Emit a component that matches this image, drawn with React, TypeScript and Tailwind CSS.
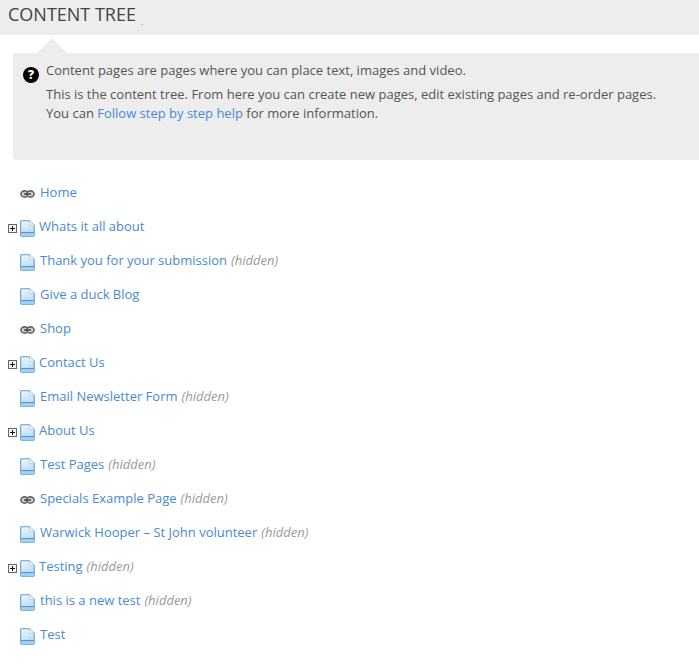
const items: { label: string; icon: "page" | "link"; plus?: boolean; hidden?: boolean }[] = [
  { label: "Home", icon: "link" },
  { label: "Whats it all about", icon: "page", plus: true },
  { label: "Thank you for your submission", icon: "page", hidden: true },
  { label: "Give a duck Blog", icon: "page" },
  { label: "Shop", icon: "link" },
  { label: "Contact Us", icon: "page", plus: true },
  { label: "Email Newsletter Form", icon: "page", hidden: true },
  { label: "About Us", icon: "page", plus: true },
  { label: "Test Pages", icon: "page", hidden: true },
  { label: "Specials Example Page", icon: "link", hidden: true },
  { label: "Warwick Hooper – St John volunteer", icon: "page", hidden: true },
  { label: "Testing", icon: "page", plus: true, hidden: true },
  { label: "this is a new test", icon: "page", hidden: true },
  { label: "Test", icon: "page" },
];

function PageIcon() {
  return (
    <svg width="15" height="17" viewBox="0 0 15 17" className="mt-[3px] shrink-0">
      <defs>
        <linearGradient id="pg" x1="0" y1="0" x2="0.3" y2="1">
          <stop offset="0" stopColor="#f3f8fd" />
          <stop offset="1" stopColor="#b9d8f2" />
        </linearGradient>
      </defs>
      <path d="M0.7 1.7 a1 1 0 0 1 1-1 H9.5 L14.2 5.2 V15.2 a1 1 0 0 1-1 1 H1.7 a1 1 0 0 1-1-1 Z" fill="url(#pg)" stroke="#5a9fd8" strokeWidth="1.1" />
      <path d="M9.5 0.7 V5.2 H14.2 Z" fill="#fafdff" stroke="#a9cdeb" strokeWidth="0.8" />
      <rect x="1.2" y="12" width="12.5" height="1.4" fill="#4f97d6" />
      <rect x="1.2" y="13.4" width="12.5" height="2.3" fill="#a6d0f0" />
    </svg>
  );
}

function LinkIcon() {
  return (
    <svg width="15" height="18" viewBox="0 0 15 18" className="shrink-0">
      <ellipse cx="4.6" cy="10" rx="3.7" ry="3.1" fill="#ccc" stroke="#666" strokeWidth="1.6" />
      <ellipse cx="10.4" cy="10" rx="3.7" ry="3.1" fill="#ccc" stroke="#666" strokeWidth="1.6" />
      <path d="M4 10 H11" stroke="#333" strokeWidth="1.3" />
    </svg>
  );
}

function Plus() {
  return (
    <svg width="9" height="9" viewBox="0 0 9 9" className="mt-[3px] shrink-0">
      <rect x="0.5" y="0.5" width="8" height="8" fill="#f4f4f4" stroke="#666" />
      <path d="M2 4.5 H7 M4.5 2 V7" stroke="#111" />
    </svg>
  );
}

export default function App() {
  return (
    <div className="w-[699px] h-[664px] overflow-hidden bg-white text-[13px] text-[#555] font-['Open_Sans',sans-serif]">
      <div className="flex h-[35px] bg-[#ededed] pl-2 pt-[2px] text-[18px] leading-[24px] text-[#444]">
        CONTENT TREE
        <span className="ml-[5px] mt-[22px] h-px w-[2px] bg-[#bbb]" />
      </div>
      <div className="relative ml-[13px] mt-[18px] h-[107px] rounded-l-[3px] bg-[#ededed] pl-[33px] pt-[8px] leading-[19px]">
        <div className="absolute left-[24px] top-[-15px] h-0 w-0 border-x-[15px] border-b-[15px] border-x-transparent border-b-[#ededed]" />
        <svg width="16" height="16" viewBox="0 0 16 16" className="absolute left-[10px] top-[14px]">
          <circle cx="8" cy="8" r="8" fill="#000" />
          <text x="8" y="12" textAnchor="middle" fontSize="12" fontWeight="800" fill="#fff" fontFamily="Open Sans, sans-serif">?</text>
        </svg>
        <p>Content pages are pages where you can place text, images and video.</p>
        <p className="mt-[5px]">This is the content tree. From here you can create new pages, edit existing pages and re-order pages.</p>
        <p>You can <span className="text-[#4a8ad8]">Follow step by step help</span> for more information.</p>
      </div>
      <div className="mt-[16px]">
        {items.map((it) => (
          <div key={it.label} className="flex h-[34px] items-center">
            <div className="flex w-[12px] ml-2 shrink-0 items-center">{it.plus && <Plus />}</div>
            {it.icon === "link" ? <LinkIcon /> : <PageIcon />}
            <span className={`whitespace-nowrap text-[#4a8ad0] ${it.plus ? "ml-[4px]" : "ml-[5px]"}`}>{it.label}</span>
            {it.hidden && <span className="ml-1 whitespace-nowrap italic text-[#999]">(hidden)</span>}
          </div>
        ))}
      </div>
    </div>
  );
}
